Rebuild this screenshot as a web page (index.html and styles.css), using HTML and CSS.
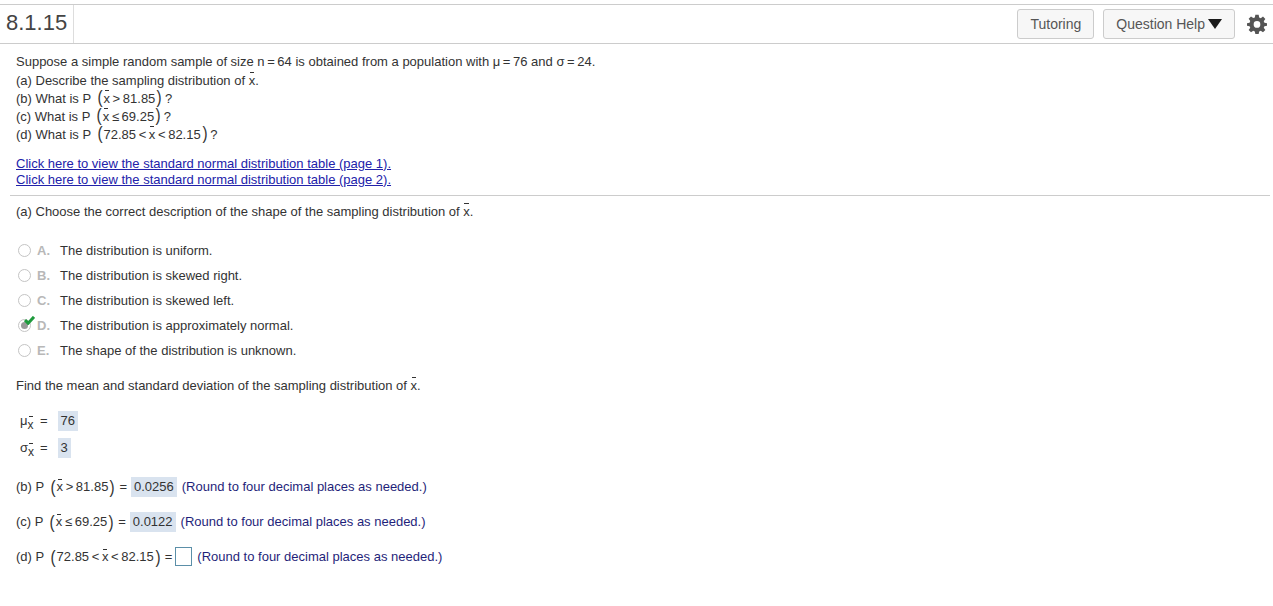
FILE: index.html
```html
<!DOCTYPE html>
<html lang="en">
<head>
<meta charset="utf-8">
<title>8.1.15</title>
<link rel="stylesheet" href="styles.css">
</head>
<body>
<header class="top">
  <div class="num">8.1.15</div>
  <div class="actions">
    <button class="btn">Tutoring</button>
    <button class="btn help">Question Help <svg class="tri" width="14" height="10" viewBox="0 0 14 10"><path d="M0 0H14L7 10Z" fill="#1a1a1a"/></svg></button>
    <svg class="gear" width="20" height="20" viewBox="0 0 24 24"><path fill="#555" fill-rule="evenodd" d="M10 1h4l.6 3.200 1.900.8 2.700-1.900 2.800 2.800-1.900 2.700.8 1.900L24 11v3l-3.100.6-.8 1.900 1.900 2.700-2.800 2.800-2.700-1.900-1.900.8L14 24h-4l-.6-3.100-1.900-.8-2.700 1.900-2.800-2.800 1.900-2.700-.8-1.900L0 14v-3l3.100-.6.8-1.900L2 5.800 4.800 3l2.700 1.900 1.900-.8L10 1Zm2 7.500a4 4 0 1 0 0 8 4 4 0 0 0 0-8Z"/></svg>
  </div>
</header>
<main class="content">
  <section class="question">
    <p class="q1">Suppose a simple random sample of size n&#8201;=&#8201;64 is obtained from a population with μ&#8201;=&#8201;76 and σ&#8201;=&#8201;24.</p>
    <p class="q2">(a) Describe the sampling distribution of <span class="x">x</span>.</p>
    <p class="q3">(b) What is P <span class="p">(</span><span class="x">x</span>&#8201;&gt;&#8201;81.85<span class="p r">)</span>&#8201;?</p>
    <p class="q3">(c) What is P <span class="p">(</span><span class="x">x</span>&#8201;≤&#8201;69.25<span class="p r">)</span>&#8201;?</p>
    <p class="q3">(d) What is P <span class="p">(</span>72.85&#8201;&lt;&#8201;<span class="x">x</span>&#8201;&lt;&#8201;82.15<span class="p r">)</span>&#8201;?</p>
  </section>
  <section class="links">
    <a href="#">Click here to view the standard normal distribution table (page 1).</a>
    <a href="#">Click here to view the standard normal distribution table (page 2).</a>
  </section>
  <hr class="rule">
  <section class="answers">
    <p class="part-a">(a) Choose the correct description of the shape of the sampling distribution of <span class="x">x</span>.</p>
    <ul class="options">
      <li><span class="radio"></span><span class="letter">A.</span><span>The distribution is uniform.</span></li>
      <li><span class="radio"></span><span class="letter">B.</span><span>The distribution is skewed right.</span></li>
      <li><span class="radio"></span><span class="letter">C.</span><span>The distribution is skewed left.</span></li>
      <li><span class="radio on"><svg class="check" width="11" height="9" viewBox="0 0 12 10"><path d="M1 4.500 4.500 8 11 1" fill="none" stroke="#1e9a3c" stroke-width="3.400"/></svg></span><span class="letter">D.</span><span>The distribution is approximately normal.</span></li>
      <li><span class="radio"></span><span class="letter">E.</span><span>The shape of the distribution is unknown.</span></li>
    </ul>
    <p class="find">Find the mean and standard deviation of the sampling distribution of <span class="x">x</span>.</p>
    <div class="stat first"><span class="sym">μ<span class="x subx">x</span></span><span class="eq">=</span><span class="val">76</span></div>
    <div class="stat"><span class="sym">σ<span class="x subx">x</span></span><span class="eq">=</span><span class="val">3</span></div>
    <div class="prob first-prob"><span>(b) P </span><span class="p">(</span><span class="x">x</span><span>&#8201;&gt;&#8201;81.85</span><span class="p r">)</span><span class="eq2">=</span><span class="val">0.0256</span><span class="note">(Round to four decimal places as needed.)</span></div>
    <div class="prob"><span>(c) P </span><span class="p">(</span><span class="x">x</span><span>&#8201;≤&#8201;69.25</span><span class="p r">)</span><span class="eq2">=</span><span class="val">0.0122</span><span class="note">(Round to four decimal places as needed.)</span></div>
    <div class="prob"><span>(d) P </span><span class="p">(</span><span>72.85&#8201;&lt;&#8201;</span><span class="x">x</span><span>&#8201;&lt;&#8201;82.15</span><span class="p r">)</span><span class="eq3">=</span><span class="box"></span><span class="note">(Round to four decimal places as needed.)</span></div>
  </section>
</main>
</body>
</html>
```
FILE: styles.css
```css
* { box-sizing: border-box; }
html, body { margin: 0; padding: 0; }
body {
  background: #fff;
  color: #333;
  font-family: "Liberation Sans", Arial, sans-serif;
  font-size: 13px;
  padding-top: 4px;
  overflow: hidden;
  height: 606px;
}
p { margin: 0; }
.top {
  display: flex;
  justify-content: space-between;
  align-items: stretch;
  height: 40px;
  border-top: 1px solid #ccc;
  border-bottom: 1px solid #ccc;
}
.num {
  width: 74px;
  padding: 0 0 0 6px;
  font-size: 22px;
  line-height: 36px;
  color: #444;
  border-right: 1px solid #ddd;
}
.actions { display: flex; align-items: center; padding-right: 6px; }
.btn {
  font: 14px "Liberation Sans", Arial, sans-serif;
  color: #555;
  height: 30px;
  padding: 0 12px;
  background: #f7f7f7;
  border: 1px solid #ccc;
  border-radius: 3px;
  margin-right: 9px;
}
.help { margin-right: 12px; display: flex; align-items: center; gap: 3px; }
.tri { display: block; }
.gear { display: block; }
.content { padding: 0 3px 0 16px; }
.question { padding-top: 8px; }
.question p { height: 18px; line-height: 18px; }
.question .q1 { height: 20px; line-height: 19px; }
.x { position: relative; display: inline-block; }
.x::before {
  content: "";
  position: absolute;
  left: 1px;
  right: 1px;
  top: 0;
  height: 1px;
  background: #333;
}
.p { font-size: 18px; line-height: 10px; margin: 0 1px 0 2px; font-weight: 400; transform: scaleX(0.85); display: inline-block; }
.p.r { margin: 0 0 0 1px; }
.links { margin-top: 12px; display: flex; flex-direction: column; }
.links a { color: #2222aa; line-height: 16px; height: 16px; text-decoration: underline; }
.rule { margin: 7px 0 0 -6px; border: 0; border-top: 1px solid #ccc; }
.part-a { margin-top: 7px; line-height: 18px; }
.options { list-style: none; margin: 17px 0 0; padding: 0; }
.options li { display: flex; align-items: center; height: 25px; }
.radio {
  position: relative;
  width: 13px;
  height: 13px;
  margin-left: 2px;
  border: 1px solid #c4c4c4;
  border-radius: 50%;
  background: #fff;
}
.radio.on::before {
  content: "";
  position: absolute;
  left: 2px; top: 2px;
  width: 7px; height: 7px;
  border-radius: 50%;
  background: #999;
}
.check { position: absolute; left: 5px; top: -4px; }
.letter { width: 29px; padding-left: 6px; color: #b8b8b8; font-weight: 700; }
.find { margin-top: 14px; line-height: 18px; }
.stat { display: flex; align-items: center; height: 27px; }
.stat.first { margin-top: 12px; }
.sym { width: 24px; padding-left: 4px; white-space: nowrap; }
.subx { font-size: 12px; top: 4px; }
.subx::before { top: -2px; left: 1px; right: 1px; }
.eq { margin-right: 10px; }
.val { display: inline-block; background: #d9e3ef; padding: 0 3px; line-height: 20px; }
.prob { display: flex; align-items: center; height: 35px; white-space: pre; }
.first-prob { margin-top: 8px; }
.eq2 { margin: 0 4px 0 4px; }
.eq3 { margin: 0 3px 0 4px; }
.note { color: #1f1f7a; margin-left: 5px; }
.box { width: 17px; height: 19px; border: 1px solid #5b8fa8; }
```
